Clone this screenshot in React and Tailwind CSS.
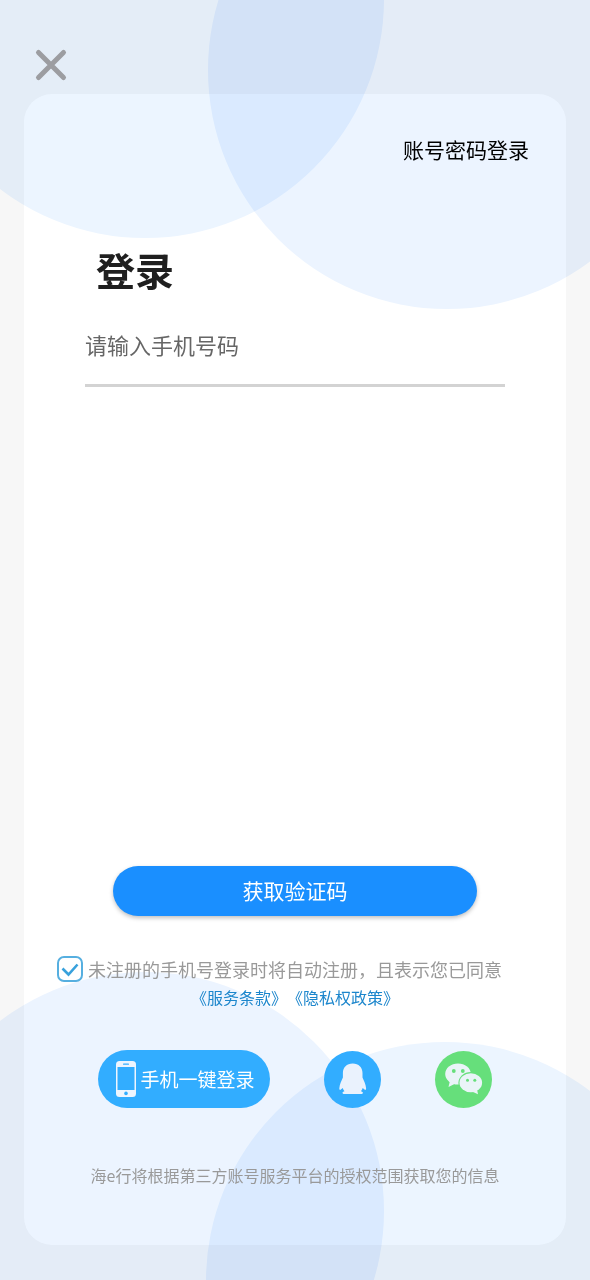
import { useState } from "react";

const PhoneIcon = () => (
  <svg width="20" height="36" viewBox="0 0 20 36" aria-hidden="true">
    <rect width="20" height="36" rx="3.5" fill="#eef5fe" />
    <rect x="1.5" y="6" width="17" height="23" fill="#32adff" />
    <rect x="7" y="2.6" width="6" height="1.2" rx="0.6" fill="#32adff" />
    <circle cx="10" cy="32.4" r="1.8" fill="#32adff" />
  </svg>
);

const QqIcon = () => (
  <svg width="57" height="57" viewBox="0 0 57 57" aria-hidden="true">
    <path
      fill="#eaf2fd"
      d="M28.700 12.500c-6 0-9.800 4-9.800 9.500v4.500c-1.600 3.500-3.300 7-3.600 11 0 1.400.8 1.800 1.600 1 .6-.6 1.200-1 1.800-1.400.4 1.100 1 2.200 1.800 3.100-1.200.3-2 .9-2 1.600 0 .8.7 1.200 2 1.200h16.400c1.300 0 2-.4 2-1.200 0-.7-.8-1.300-2-1.600.8-.9 1.400-2 1.800-3.100.6.4 1.200.8 1.800 1.400.8.8 1.600.4 1.600-1-.3-4-2-7.500-3.600-11v-4.500c0-5.500-3.800-9.500-9.800-9.500z"
    />
  </svg>
);

const WechatIcon = () => (
  <svg width="57" height="57" viewBox="0 0 57 57" aria-hidden="true">
    <g fill="#eaf4f8">
      <ellipse cx="23" cy="23" rx="12.800" ry="10.500" />
      <path d="M15 29.500l-1.500 6.500 7-3.500z" />
    </g>
    <circle cx="18.800" cy="20" r="1.900" fill="#66df7b" />
    <circle cx="27.800" cy="20" r="1.900" fill="#66df7b" />
    <ellipse cx="35.800" cy="31.700" rx="12.400" ry="10.600" fill="#66df7b" />
    <g fill="#eaf4f8">
      <ellipse cx="35.800" cy="31.700" rx="11.300" ry="9.500" />
      <path d="M37 40.500l6 2.800-1-5.300z" />
    </g>
    <circle cx="32.500" cy="29.300" r="1.500" fill="#66df7b" />
    <circle cx="39.800" cy="29.300" r="1.500" fill="#66df7b" />
  </svg>
);

const App = () => {
  const [phone, setPhone] = useState("");
  const [agreed, setAgreed] = useState(true);

  const handleSubmit = (e) => {
    e.preventDefault();
  };

  return (
    <div className="relative isolate flex min-h-screen flex-col overflow-hidden bg-[#f7f7f7] font-['Noto_Sans_CJK_SC',sans-serif]">
      {/* Background circles */}
      <div aria-hidden="true" className="pointer-events-none absolute -top-60 -left-[94px] size-[478px] rounded-full bg-[#ecf5ff] mix-blend-multiply" />
      <div aria-hidden="true" className="pointer-events-none absolute -top-[169px] -right-24 size-[478px] rounded-full bg-[#ecf4ff] mix-blend-multiply" />
      <div aria-hidden="true" className="pointer-events-none absolute -bottom-[170px] -left-[94px] size-[478px] rounded-full bg-[#ecf4ff] mix-blend-multiply" />
      <div aria-hidden="true" className="pointer-events-none absolute -right-[94px] -bottom-60 size-[478px] rounded-full bg-[#ecf5ff] mix-blend-multiply" />

      <header className="px-8 pt-[46px] pb-[10px]">
        <button type="button" aria-label="关闭" className="relative z-10 block cursor-pointer">
          <svg width="38" height="38" viewBox="0 0 38 38" fill="none" stroke="#9c9da1" strokeWidth="5" strokeLinecap="round" aria-hidden="true">
            <path d="M6.500 6.500l25 25M31.500 6.500l-25 25" />
          </svg>
        </button>
      </header>

      <main className="mx-6 mb-[35px] flex flex-1 flex-col rounded-[28px] bg-white">
        <form onSubmit={handleSubmit} className="relative z-10 flex flex-1 flex-col pt-10 pb-[58px]">
          <a href="#password" className="mr-[37px] self-end text-[21px] leading-[30px] text-black">
            账号密码登录
          </a>

          <h1 className="mt-[77px] ml-[72px] text-[39px] leading-[56px] font-bold text-[#1f1f1f]">登录</h1>

          <div className="mx-[61px] mt-[27px] border-b-[3px] border-[#d3d3d3] pb-5">
            <input
              type="tel"
              aria-label="手机号码"
              placeholder="请输入手机号码"
              value={phone}
              onChange={(e) => setPhone(e.target.value)}
              className="block h-10 w-full bg-transparent text-[22px] text-[#333] outline-none placeholder:text-[#666]"
            />
          </div>

          <button
            type="submit"
            className="mx-[89px] mt-auto h-[50px] cursor-pointer rounded-full bg-[#1a8fff] pb-[2px] text-[21px] leading-[30px] text-white shadow-[0_2px_4px_rgba(0,0,0,0.25)]"
          >
            获取验证码
          </button>

          {/* Agreement */}
          <div className="mt-10 ml-[33px] flex items-center gap-[5px]">
            <div className="relative size-[26px] shrink-0">
              <input
                id="agree"
                type="checkbox"
                checked={agreed}
                onChange={(e) => setAgreed(e.target.checked)}
                className="block size-[26px] cursor-pointer appearance-none rounded-[7px] border-2 border-[#56afe0] bg-white"
              />
              {agreed && (
                <svg className="pointer-events-none absolute inset-0" width="26" height="26" viewBox="0 0 26 26" fill="none" stroke="#38a1dc" strokeWidth="2.600" aria-hidden="true">
                  <path d="M5.500 12.500l6 6L20.500 8.500" />
                </svg>
              )}
            </div>
            <label htmlFor="agree" className="text-lg leading-[26px] text-[#999]">
              未注册的手机号登录时将自动注册，且表示您已同意
            </label>
          </div>
          <div className="mt-[3px] flex justify-center text-base leading-6 text-[#1c86cc]">
            <a href="#terms">《服务条款》</a>
            <a href="#privacy">《隐私权政策》</a>
          </div>

          {/* Other ways to log in */}
          <div className="mt-[41px] flex items-center justify-center gap-[54px]">
            <button
              type="button"
              className="flex h-[58px] cursor-pointer items-center gap-1 rounded-full bg-[#32adff] pr-[15px] pl-[18px] text-[19px] text-white"
            >
              <PhoneIcon />
              手机一键登录
            </button>
            <button type="button" aria-label="QQ登录" className="cursor-pointer rounded-full bg-[#32adff]">
              <QqIcon />
            </button>
            <button type="button" aria-label="微信登录" className="cursor-pointer rounded-full bg-[#66df7b]">
              <WechatIcon />
            </button>
          </div>

          <p className="mt-[55px] text-center text-base leading-6 text-[#999]">
            海e行将根据第三方账号服务平台的授权范围获取您的信息
          </p>
        </form>
      </main>
    </div>
  );
};

export default App;
